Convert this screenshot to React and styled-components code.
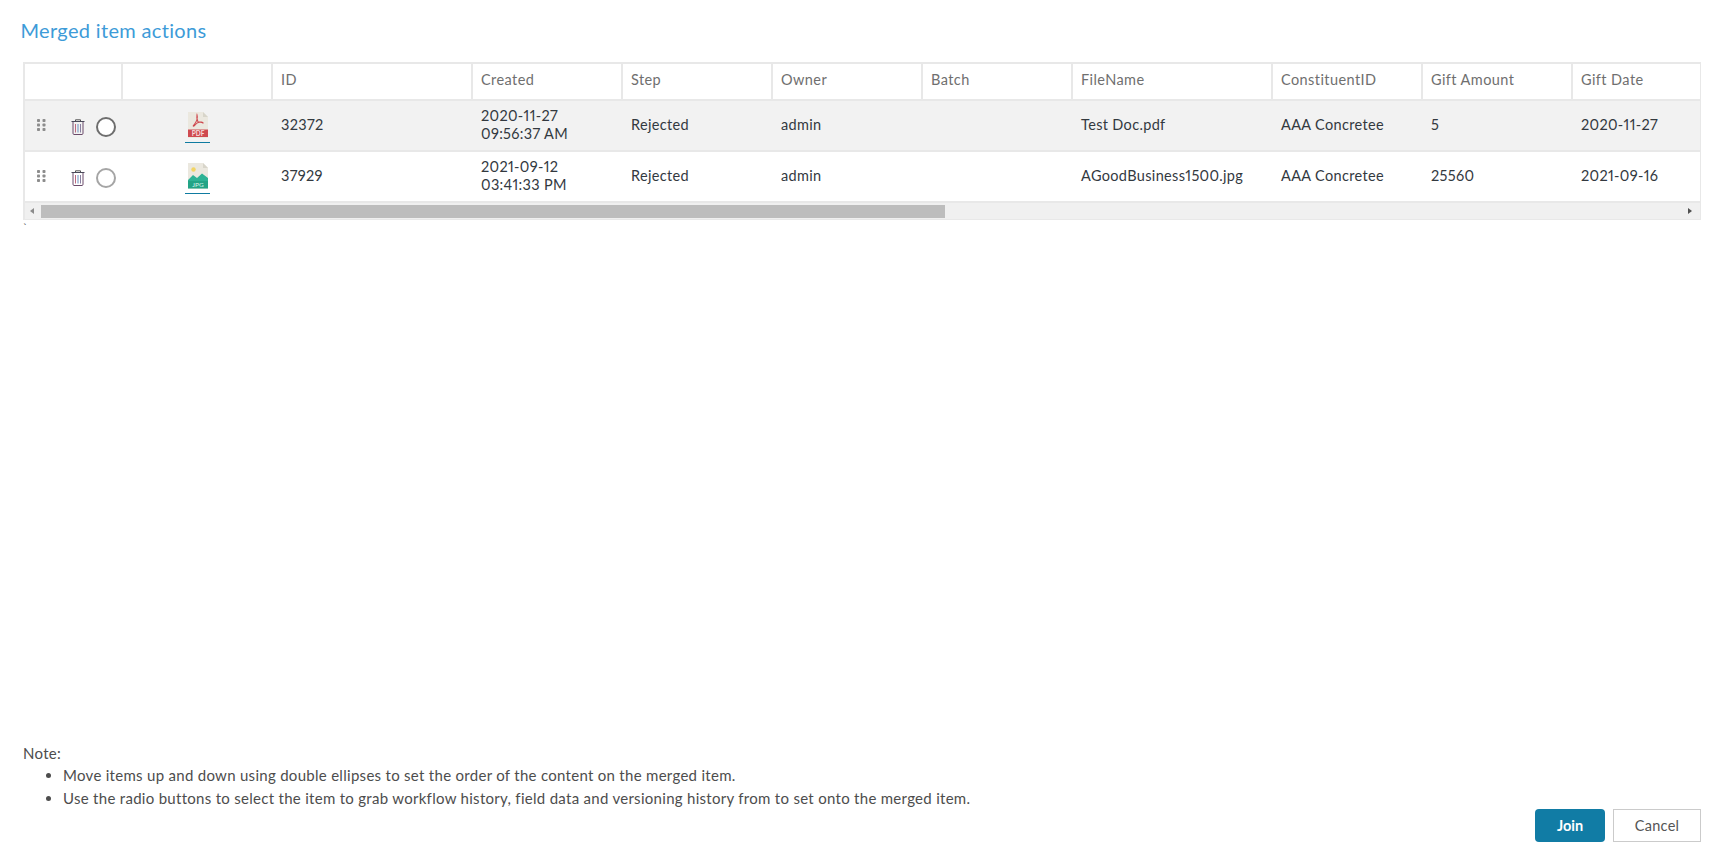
import React from "react";
import styled, { createGlobalStyle } from "styled-components";

const Global = createGlobalStyle`
  html, body { margin: 0; padding: 0; background: #fff; }
  body { font-family: Lato, "Open Sans", sans-serif; font-feature-settings: "pnum" 1, "lnum" 1; }
`;

const COLS = "98px 150px 200px 150px 150px 150px 150px 200px 150px 150px 1fr";

const Page = styled.div`
  height: 862px;
  box-sizing: border-box;
  padding: 19px 22px 20px 21px;
  display: flex;
  flex-direction: column;
  overflow: hidden;
`;
const Title = styled.h1`
  margin: 0 0 20px -0.5px;
  height: 23px;
  font-size: 20px;
  line-height: 23px;
  font-weight: 400;
  letter-spacing: 0.33px;
  color: #3d9bd8;
`;
const Table = styled.div`
  margin-left: 2px;
  border: 1px solid #e8e8e8;
  border-top-width: 2px;
  border-left-width: 2px;
`;
const Row = styled.div`
  display: grid;
  grid-template-columns: ${COLS};
  height: ${(p) => p.$h}px;
  box-sizing: border-box;
  border-bottom: 2px solid #e8e8e8;
  background: ${(p) => (p.$shade ? "#f2f2f2" : "#fff")};
`;
const HeadCell = styled.div`
  border-right: ${(p) => (p.$last ? "none" : "2px solid #e8e8e8")};
  padding: 0 8px 4px;
  display: flex;
  align-items: center;
  font-size: 14.5px;
  letter-spacing: 0.42px;
  color: #6f6f6f;
  white-space: nowrap;
`;
const Cell = styled.div`
  padding: 0 9px 1px;
  margin-left: -1px;
  display: flex;
  align-items: center;
  font-size: 14.5px;
  line-height: 18.5px;
  letter-spacing: 0.34px;
  color: #33393f;
  white-space: nowrap;
`;
const ActionCell = styled.div`
  display: flex;
  align-items: flex-start;
`;
const Drag = styled.svg`
  width: 9px;
  height: 13px;
  margin: 18px 0 0 12px;
`;
const Trash = styled.svg`
  width: 14px;
  height: 16px;
  margin: 18px 0 0 25px;
`;
const Radio = styled.span`
  box-sizing: border-box;
  width: 20px;
  height: 20px;
  margin: 16px 0 0 11px;
  border-radius: 50%;
  background: #fff;
  border: 2px solid ${(p) => (p.$on ? "#6e6e6e" : "#a5a5a5")};
`;
const FileCell = styled.div`
  display: flex;
  justify-content: center;
  padding-right: 1px;
`;
const FileLink = styled.a`
  display: block;
  width: 25px;
  height: 32px;
  margin-top: 10px;
  padding-top: 1px;
  box-sizing: border-box;
  border-bottom: 1px solid #0f7ba1;
`;
const FileSvg = styled.svg`
  display: block;
  margin: 0 auto;
`;
const ScrollBar = styled.div`
  height: 16px;
  background: #f0f0f0;
  display: flex;
  align-items: center;
  padding: 0 8px 0 5px;
`;
const Thumb = styled.div`
  width: 904px;
  height: 13px;
  margin-left: 7px;
  background: #bdbdbd;
  flex: none;
`;
const Spacer = styled.div`flex: 1;`;
const Arrow = styled.span`
  width: 0;
  height: 0;
  border-top: 3.5px solid transparent;
  border-bottom: 3.5px solid transparent;
  ${(p) => (p.$right ? "border-left: 4px solid #505050;" : "border-right: 4px solid #8a8a8a;")}
`;
const Tick = styled.div`
  margin: 3px 0 0 2px;
  height: 10px;
  font-size: 11px;
  line-height: 10px;
  color: #555;
`;
const Footer = styled.div`
  margin-top: auto;
  display: flex;
  justify-content: space-between;
  align-items: flex-end;
`;
const Notes = styled.div`
  margin-left: 2px;
  padding-bottom: 33px;
  font-size: 15px;
  line-height: 22.5px;
  letter-spacing: 0.29px;
  color: #4d4d4d;
`;
const NoteList = styled.ul`
  margin: 0;
  padding: 0 0 0 40px;
`;
const Actions = styled.div`
  display: flex;
  gap: 8px;
`;
const Join = styled.button`
  width: 70px;
  height: 33px;
  border: none;
  border-radius: 4px;
  background: #117ca5;
  color: #fff;
  font: 700 14.5px Lato, sans-serif;
`;
const Cancel = styled.button`
  width: 88px;
  height: 33px;
  border: 1px solid #cbcbcb;
  border-radius: 0;
  background: #fff;
  color: #555;
  font: 400 14.5px Lato, sans-serif;
  letter-spacing: 0.3px;
`;

const DragIcon = () => (
  <Drag viewBox="0 0 9 13">
    {[1.5, 6, 10.5].flatMap((y) =>
      [1.5, 7].map((x) => <rect key={`${x}-${y}`} x={x - 1.5} y={y - 1.5} width="3" height="3" rx="0.8" fill="#8d8d8d" />)
    )}
  </Drag>
);

const TrashIcon = () => (
  <Trash viewBox="0 0 14 16" fill="none">
    <path d="M4.500 2V0.800h5V2" stroke="#555" />
    <path d="M0.500 2.500h13" stroke="#4a4a5a" />
    <path d="M2 3v11.300c0 .7.4 1.200 1 1.200h8c.6 0 1-.5 1-1.200V3" stroke="#6a4a6a" />
    <path d="M4.500 5v8.500" stroke="#c06a80" />
    <path d="M7 5v8.500" stroke="#6a90c0" />
    <path d="M9.500 5v8.500" stroke="#8a80a0" />
  </Trash>
);

const PdfIcon = () => (
  <FileSvg width="20" height="26" viewBox="0 0 20 26">
    <path d="M0 0h15l5 5v21H0z" fill="#ebe8df" />
    <path d="M15 0l5 5h-5z" fill="#d8d5ca" />
    <rect y="17.500" width="20" height="7.500" fill="#cf4a50" />
    <path d="M9 3c1 3 0 6-3 10-1.500 1.500-.5 1.500 1 0 2.500-3 6-3.500 8-2 .5-1-3-1-5-1C9 8 8.500 5 9 3z" fill="none" stroke="#cf4a50" strokeWidth="1.100" />
    <text x="10" y="23.500" textAnchor="middle" fontFamily="Lato, sans-serif" fontSize="6.500" fontWeight="700" fill="#f6dcdc">PDF</text>
  </FileSvg>
);

const JpgIcon = () => (
  <FileSvg width="20" height="26" viewBox="0 0 20 26">
    <path d="M0 0h15l5 5v21H0z" fill="#ebe8df" />
    <path d="M15 0l5 5h-5z" fill="#d8d5ca" />
    <circle cx="5.500" cy="6.500" r="2.200" fill="#f2d566" />
    <path d="M0 17l5-5 4 3 5-4.500 6 4.500v6H0z" fill="#2db295" />
    <rect y="18" width="20" height="7.500" fill="#23a486" />
    <text x="10" y="24" textAnchor="middle" fontFamily="Lato, sans-serif" fontSize="6.500" fill="#d8f2ea">JPG</text>
  </FileSvg>
);

const headers = ["ID", "Created", "Step", "Owner", "Batch", "FileName", "ConstituentID", "Gift Amount", "Gift Date"];

const rows = [
  { id: "32372", created: ["2020-11-27", "09:56:37 AM"], file: "Test Doc.pdf", amount: "5", date: "2020-11-27", shade: true, on: true, Icon: PdfIcon },
  { id: "37929", created: ["2021-09-12", "03:41:33 PM"], file: "AGoodBusiness1500.jpg", amount: "25560", date: "2021-09-16", shade: false, on: false, Icon: JpgIcon },
];

export default function App() {
  return (
    <Page>
      <Global />
      <Title>Merged item actions</Title>
      <Table>
        <Row $h={37}>
          <HeadCell />
          <HeadCell />
          {headers.map((h, i) => (
            <HeadCell key={h} $last={i === headers.length - 1}>{h}</HeadCell>
          ))}
        </Row>
        {rows.map((r) => (
          <Row key={r.id} $h={51} $shade={r.shade}>
            <ActionCell>
              <DragIcon />
              <TrashIcon />
              <Radio $on={r.on} />
            </ActionCell>
            <FileCell>
              <FileLink href="#"><r.Icon /></FileLink>
            </FileCell>
            <Cell>{r.id}</Cell>
            <Cell><div>{r.created[0]}<br />{r.created[1]}</div></Cell>
            <Cell>Rejected</Cell>
            <Cell>admin</Cell>
            <Cell />
            <Cell>{r.file}</Cell>
            <Cell>AAA Concretee</Cell>
            <Cell>{r.amount}</Cell>
            <Cell>{r.date}</Cell>
          </Row>
        ))}
        <ScrollBar>
          <Arrow />
          <Thumb />
          <Spacer />
          <Arrow $right />
        </ScrollBar>
      </Table>
      <Tick>`</Tick>
      <Footer>
        <Notes>
          Note:
          <NoteList>
            <li>Move items up and down using double ellipses to set the order of the content on the merged item.</li>
            <li>Use the radio buttons to select the item to grab workflow history, field data and versioning history from to set onto the merged item.</li>
          </NoteList>
        </Notes>
        <Actions>
          <Join>Join</Join>
          <Cancel>Cancel</Cancel>
        </Actions>
      </Footer>
    </Page>
  );
}
